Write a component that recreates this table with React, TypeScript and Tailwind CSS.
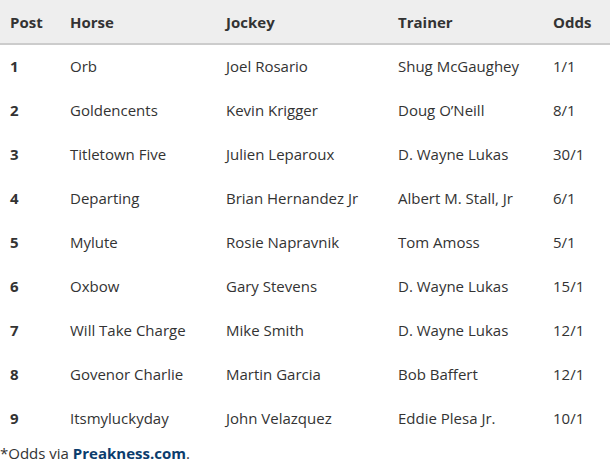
import React from 'react';

const rows = [
    ['1', 'Orb', 'Joel Rosario', 'Shug McGaughey', '1/1'],
    ['2', 'Goldencents', 'Kevin Krigger', 'Doug O\u2019Neill', '8/1'],
    ['3', 'Titletown Five', 'Julien Leparoux', 'D. Wayne Lukas', '30/1'],
    ['4', 'Departing', 'Brian Hernandez Jr', 'Albert M. Stall, Jr', '6/1'],
    ['5', 'Mylute', 'Rosie Napravnik', 'Tom Amoss', '5/1'],
    ['6', 'Oxbow', 'Gary Stevens', 'D. Wayne Lukas', '15/1'],
    ['7', 'Will Take Charge', 'Mike Smith', 'D. Wayne Lukas', '12/1'],
    ['8', 'Govenor Charlie', 'Martin Garcia', 'Bob Baffert', '12/1'],
    ['9', 'Itsmyluckyday', 'John Velazquez', 'Eddie Plesa Jr.', '10/1'],
];

export default function App() {
    return (
        <div className="w-[610px] bg-white text-[#333] text-[15px] font-['Open_Sans',sans-serif]">
            <table className="w-full border-collapse table-fixed">
                <colgroup>
                    <col className="w-[60px]" />
                    <col className="w-[156px]" />
                    <col className="w-[172px]" />
                    <col className="w-[155px]" />
                    <col />
                </colgroup>
                <thead>
                    <tr className="h-[44px] bg-[#eeeeee] border-b-2 border-[#cccccc] text-left">
                        <th className="pl-[10px] pt-[2px] font-bold">Post</th>
                        <th className="pl-[10px] pt-[2px] font-bold">Horse</th>
                        <th className="pl-[10px] pt-[2px] font-bold">Jockey</th>
                        <th className="pl-[10px] pt-[2px] font-bold">Trainer</th>
                        <th className="pl-[10px] pt-[2px] font-bold">Odds</th>
                    </tr>
                </thead>
                <tbody>
                    {rows.map((r) => (
                        <tr key={r[0]} className="h-[44px]">
                            <td className="pl-[10px] font-bold">{r[0]}</td>
                            <td className="pl-[10px] whitespace-nowrap">{r[1]}</td>
                            <td className="pl-[10px] whitespace-nowrap">{r[2]}</td>
                            <td className="pl-[10px] whitespace-nowrap">{r[3]}</td>
                            <td className="pl-[10px] whitespace-nowrap">{r[4]}</td>
                        </tr>
                    ))}
                </tbody>
            </table>
            <p className="mt-[2px] leading-[22px]">
                *Odds via <a className="font-bold text-[#0b3c6d]">Preakness.com</a>.
            </p>
        </div>
    );
}
